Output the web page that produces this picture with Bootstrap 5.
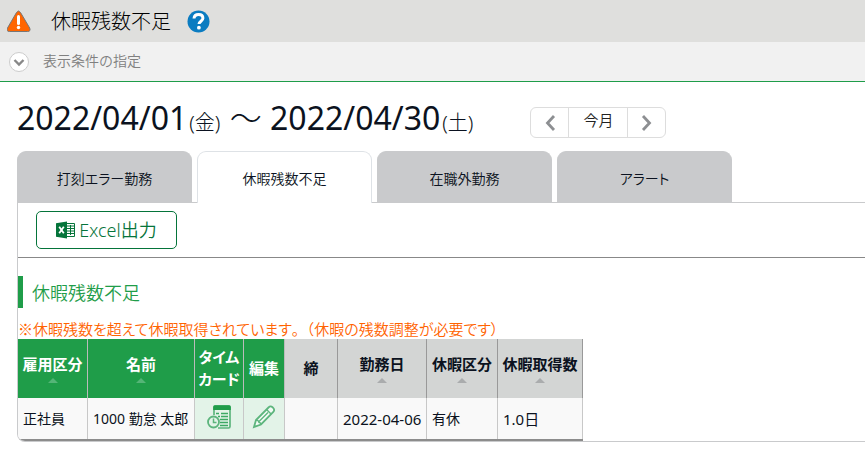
<!DOCTYPE html>
<html lang="ja">
<head>
<meta charset="utf-8">
<meta name="viewport" content="width=device-width, initial-scale=1">
<title>休暇残数不足</title>
<link href="https://cdn.jsdelivr.net/npm/bootstrap@5.3.0/dist/css/bootstrap.min.css" rel="stylesheet">
<style>
:root { --line: #c9cacc; --green: #1f9d49; --ink: #0b1220; }
body { font-family: "Noto Sans", "Noto Sans CJK JP", sans-serif; font-size: 14px; line-height: 20px; color: var(--ink); font-feature-settings: "palt"; }
.jp { font-family: "Noto Sans CJK JP", sans-serif; font-weight: 350; }
.title-bar { background: #dfdfdd; height: 42px; padding: 0 7px; }
.title-bar h1 { font-size: 20px; line-height: 28px; margin: 0 16px 0 20px; color: #000; font-weight: 300; }
.filter-bar { background: #f1f1f1; height: 40px; padding: 0 9px; border-bottom: 1px solid var(--green); }
.filter-bar button { color: #808080; gap: 14px; }
.filter-bar span { padding-bottom: 4px; }
.plain-btn { background: none; border: 0; padding: 0; line-height: 20px; }
.page-body { padding: 21px 0 0 17px; }
.period { height: 38px; font-size: 32px; line-height: 30px; margin: 0 57px 0 0; color: var(--ink); font-weight: 400; }
.period small { font-size: 20px; font-weight: 300; margin-left: 2px; }
.tilde { margin-left: 1px; font-weight: 300; }
.month-nav .btn { --bs-btn-border-color: #ddd; --bs-btn-color: #222; --bs-btn-font-size: 15px; height: 31px; width: 39px; padding: 2px 0 0; line-height: 24px; }
.month-nav .btn.now { width: 60px; padding: 0 0 4px; }
.tab-row { gap: 5px; margin-top: 10px; margin-bottom: -1px; border: 0; }
.tab-row .nav-link { width: 175px; height: 52px; padding: 0; border: 1px solid var(--line); border-bottom: 0; border-radius: 9px 9px 0 0; background: var(--line); color: var(--ink); font-size: 14px; margin: 0; }
.tab-row .nav-link.active { background: #fff; color: var(--ink); }
.result-panel { border: 1px solid var(--line); border-right: 0; border-bottom-left-radius: 8px; overflow: hidden; }
.tool-row { height: 55px; padding: 8px 18px; border-bottom: 1px solid #888; }
.excel-btn { --bs-btn-color: #05743a; --bs-btn-border-color: #05743a; width: 141px; height: 38px; padding: 0; font-size: 18px; font-family: "Noto Sans", "Noto Sans CJK JP", sans-serif; font-weight: 350; border-radius: 5px; gap: 4px; }
.section-title { border-left: 5px solid var(--green); color: var(--green); font-size: 18px; line-height: 32px; padding-left: 9px; margin: 18px 0 10px; }
.notice { color: #ff6300; font-size: 15px; line-height: 21px; margin: 0; }
.full-width { font-feature-settings: normal; }
.grid { width: 565px; table-layout: fixed; border-collapse: separate; border-spacing: 0; border-bottom: 2px solid #8c8c8c; margin: 0; color: var(--ink); font-size: 14px; }
.grid th { height: 59px; background: #d3d5d4; border-right: 1px solid #999; text-align: center; vertical-align: middle; font-size: 15px; line-height: 22px; padding: 0 0 2px; white-space: nowrap; font-family: "Noto Sans CJK JP", sans-serif; }
.grid th.g { background: var(--green); color: #fff; border-right-color: #bbb; }
.grid td { height: 41px; background: #f9f9f9; border-right: 1px solid #c8c8c8; padding: 0 5px; vertical-align: middle; white-space: nowrap; }
.grid td.g { background: #e3f3e8; padding: 0 0 4px; }
.grid td.amount { font-size: 15px; }
.sort::after { content: ""; display: block; width: 0; margin: 3px auto 0; border: 5px solid transparent; border-top: 0; border-bottom-color: #aaacad; }
.g .sort::after { border-bottom-color: #55b577; }
svg { display: block; flex: none; }
</style>
</head>
<body>
<header class="title-bar d-flex align-items-center">
  <svg width="24" height="24" viewBox="0 0 24 24" role="img" aria-label="警告"><path d="M9.500 3.500Q11.500.500 13.500 3.500L22.700 19Q24 22.500 20.500 22.500H2.500Q-1 22.500.5 19Z" fill="#ff6500" stroke="#777" stroke-width="1"/><path d="M11.500 7.500v7" stroke="#fff" stroke-width="3" stroke-linecap="round"/><circle cx="11.500" cy="18.500" r="1.700" fill="#fff"/></svg>
  <h1 class="jp">休暇残数不足</h1>
  <a href="#help" aria-label="ヘルプ"><svg width="23" height="23" viewBox="0 0 23 23"><circle cx="11.500" cy="11.500" r="11" fill="#0b7cc1"/><path d="M7 8.500c.2-2.500 2-4 4.600-4 2.600 0 4.300 1.500 4.300 3.700 0 3-3.900 3-3.900 5.900" fill="none" stroke="#fff" stroke-width="3"/><circle cx="11.900" cy="17.700" r="1.900" fill="#fff"/></svg></a>
</header>
<div class="filter-bar d-flex align-items-center">
  <button type="button" class="plain-btn jp d-flex align-items-center">
    <svg width="20" height="20" viewBox="0 0 20 20"><circle cx="10" cy="10" r="9.500" fill="#fff" stroke="#ccc"/><path d="M5.500 8l4.500 4.500L14.500 8" fill="none" stroke="#888" stroke-width="2.400"/></svg>
    <span>表示条件の指定</span></button>
</div>
<main class="page-body">
  <div class="d-flex align-items-center">
    <h2 class="period text-nowrap">2022/04/01<small>(金)</small> <span class="tilde">～</span> 2022/04/30<small>(土)</small></h2>
    <div class="btn-group month-nav" role="group" aria-label="月の移動">
      <button type="button" class="btn d-flex align-items-center justify-content-center" aria-label="前月"><svg width="12" height="18" viewBox="0 0 12 18"><path d="M10 2L3.500 9l6.500 7" fill="none" stroke="#8d8f92" stroke-width="2.800"/></svg></button>
      <button type="button" class="btn now jp">今月</button>
      <button type="button" class="btn d-flex align-items-center justify-content-center" aria-label="翌月"><svg width="12" height="18" viewBox="0 0 12 18"><path d="M2 2l6.500 7L2 16" fill="none" stroke="#8d8f92" stroke-width="2.800"/></svg></button>
    </div>
  </div>
  <nav class="nav nav-tabs tab-row flex-nowrap jp">
    <a class="nav-link d-flex align-items-center justify-content-center" href="#error">打刻エラー勤務</a>
    <a class="nav-link active d-flex align-items-center justify-content-center" aria-current="page" href="#shortage">休暇残数不足</a>
    <a class="nav-link d-flex align-items-center justify-content-center" href="#outside">在職外勤務</a>
    <a class="nav-link d-flex align-items-center justify-content-center" href="#alert">アラート</a>
  </nav>
  <section class="result-panel">
    <div class="tool-row">
      <button type="button" class="btn excel-btn d-flex align-items-center justify-content-center">
        <svg width="19" height="18" viewBox="0 0 19 18"><path d="M10 2.500h8.500v13H10" fill="#fff" stroke="#05743a"/><path d="M11 5h7M11 7.500h7M11 10h7M11 12.500h7M14.500 4v10" stroke="#05743a"/><path d="M0 2.200L11 .5v17L0 15.800z" fill="#05743a"/><path d="M3.200 5.800l4.600 6.400M7.800 5.800L3.200 12.200" stroke="#fff" stroke-width="1.800"/></svg>
        Excel出力</button>
    </div>
    <h3 class="section-title jp">休暇残数不足</h3>
    <p class="notice jp">※休暇残数を超えて休暇取得されています<span class="full-width">。（</span>休暇の残数調整が必要です）</p>
    <table class="grid">
      <colgroup><col style="width:70px"><col style="width:107px"><col style="width:49px"><col style="width:41px"><col style="width:53px"><col style="width:89px"><col style="width:71px"><col style="width:85px"></colgroup>
      <thead><tr>
        <th class="g" scope="col"><div class="sort">雇用区分</div></th>
        <th class="g" scope="col"><div class="sort">名前</div></th>
        <th class="g" scope="col">タイム<br>カード</th>
        <th class="g" scope="col">編集</th>
        <th scope="col">締</th>
        <th scope="col"><div class="sort">勤務日</div></th>
        <th scope="col"><div class="sort">休暇区分</div></th>
        <th scope="col"><div class="sort">休暇取得数</div></th>
      </tr></thead>
      <tbody><tr>
        <td>正社員</td><td>1000 勤怠 太郎</td>
        <td class="g"><a href="#timecard" aria-label="タイムカード"><svg class="mx-auto" width="24" height="24" viewBox="0 0 24 24"><path d="M7 10V2.500Q7 1 8.500 1H21.500Q23 1 23 2.500V21.500Q23 23 21.500 23H11" fill="none" stroke="#5db57d" stroke-width="1.700"/><path d="M6.200 5V2Q6.200.3 7.700.3h14.600Q23.800.3 23.800 2v3z" fill="#1f9d49"/><path d="M9 8.500h3M14 8.500h7M11 11.500h2M14 11.500h7M13 14.500h8M13 17.500h8M13 20.500h8" stroke="#3da964" stroke-width="1.500"/><circle cx="6.500" cy="17" r="5.500" fill="#e3f3e8" stroke="#5db57d" stroke-width="1.800"/><path d="M6.500 13.500V17.500H9.500" fill="none" stroke="#5db57d" stroke-width="1.500"/></svg></a></td>
        <td class="g"><a href="#edit" aria-label="編集"><svg class="mx-auto" width="24" height="24" viewBox="0 0 24 24"><path d="M2 22l2-7L16.500 2.500Q18.500.5 20.500 2.200l.8.8Q23 5 21.300 7L9 19.500z" fill="#f2faf5" stroke="#5db57d" stroke-width="1.800"/><path d="M14.500 4.500l4.800 4.800M7 16.500L16 7.500M4 15l2 .5 1 2 1.500.5.500 1.500" fill="none" stroke="#5db57d" stroke-width="1.400"/></svg></a></td>
        <td></td><td class="amount">2022-04-06</td><td>有休</td><td class="amount">1.0日</td>
      </tr></tbody>
    </table>
  </section>
</main>
<script src="https://cdn.jsdelivr.net/npm/bootstrap@5.3.0/dist/js/bootstrap.bundle.min.js"></script>
</body>
</html>
